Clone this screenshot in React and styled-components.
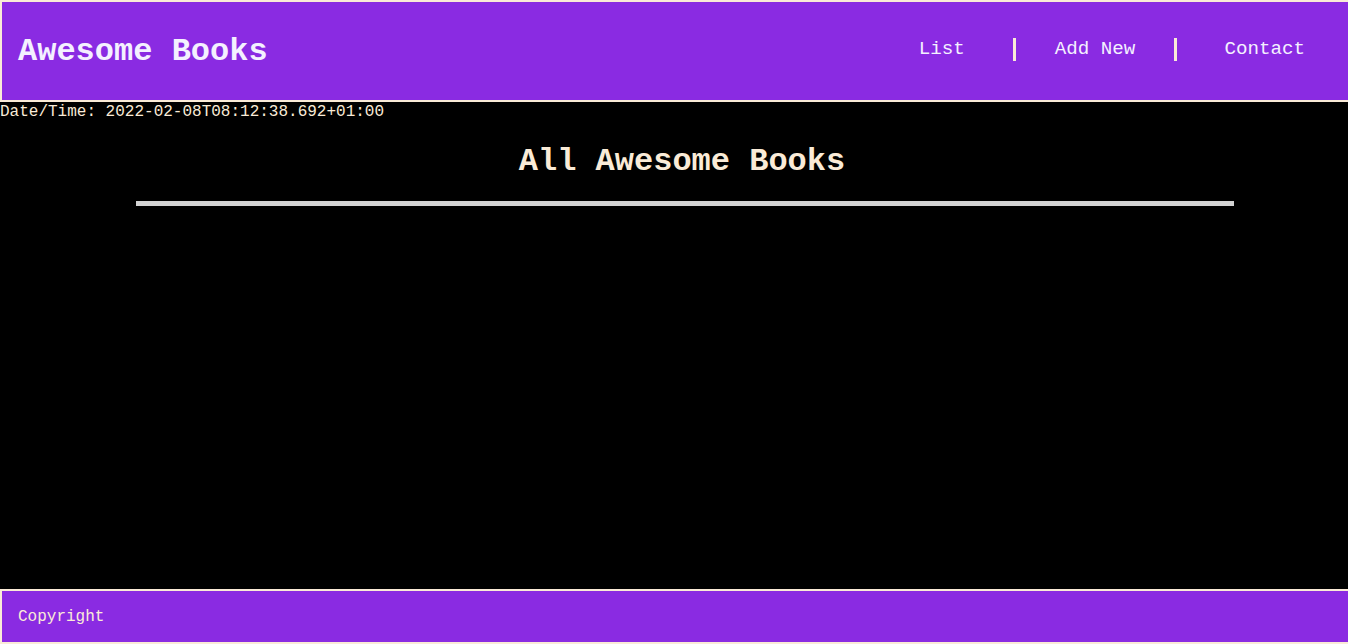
import styled, { createGlobalStyle } from 'styled-components';

const GlobalStyle = createGlobalStyle`
    html, body {
        margin: 0;
        padding: 0;
        background: #000;
        overflow: hidden;
    }

    body {
        font-family: "Liberation Mono", "Courier New", monospace;
        color: antiquewhite;
    }
`;

const links = [
    { label: 'List', pl: 0, pr: 48 },
    { label: 'Add New', pl: 39, pr: 39 },
    { label: 'Contact', pl: 47, pr: 0 },
];

export default function App() {
    return (
        <Page>
            <GlobalStyle />
            <Header>
                <Logo>Awesome Books</Logo>
                <Nav>
                    {links.map((link, i) => (
                        <NavItem key={link.label} $pl={link.pl} $pr={link.pr} $divider={i > 0}>
                            <NavLink href="#">{link.label}</NavLink>
                        </NavItem>
                    ))}
                </Nav>
            </Header>
            <DateTime>Date/Time: 2022-02-08T08:12:38.692+01:00</DateTime>
            <Main>
                <Title>All Awesome Books</Title>
                <Rule />
            </Main>
            <Footer>
                <Copy>Copyright</Copy>
            </Footer>
        </Page>
    )
}

const Page = styled.div`
    display: flex;
    flex-direction: column;
    min-height: 100vh;
`;

const Header = styled.header`
    display: flex;
    align-items: center;
    justify-content: space-between;
    height: 98px;
    padding: 0 43px 0 16px;
    background-color: blueviolet;
    border: 2px solid antiquewhite;
    border-right: 0;
`;

const Logo = styled.h1`
    margin: 0;
    font-size: 32px;
    font-weight: bold;
    color: #f4f1ff;
`;

const Nav = styled.ul`
    display: flex;
    align-items: center;
    list-style: none;
    margin: 0 0 4px;
    padding: 0;
`;

const NavItem = styled.li`
    display: flex;
    align-items: center;
    height: 23px;
    padding: 0 ${props => props.$pr}px 0 ${props => props.$pl}px;
    border-left: ${props => props.$divider ? '3px solid antiquewhite' : 'none'};
`;

const NavLink = styled.a`
    font-size: 19.2px;
    color: #f4f1ff;
    text-decoration: none;
`;

const DateTime = styled.p`
    margin: 0;
    padding-top: 1px;
    font-size: 16px;
    line-height: 19px;
`;

const Main = styled.main`
    display: flex;
    flex-direction: column;
    align-items: center;
    flex: 1;
    padding-left: 22px;
`;

const Title = styled.h2`
    margin: 22px 0 21px;
    padding-right: 6px;
    font-size: 32px;
    line-height: 36px;
    font-weight: bold;
    color: antiquewhite;
`;

const Rule = styled.hr`
    width: 1098px;
    height: 5px;
    margin: 0;
    border: 0;
    background-color: lightgray;
`;

const Footer = styled.footer`
    display: flex;
    align-items: center;
    height: 51px;
    padding: 0 16px;
    background-color: blueviolet;
    border: 2px solid antiquewhite;
    border-right: 0;
`;

const Copy = styled.p`
    margin: 0;
    font-size: 16px;
    color: antiquewhite;
`;
